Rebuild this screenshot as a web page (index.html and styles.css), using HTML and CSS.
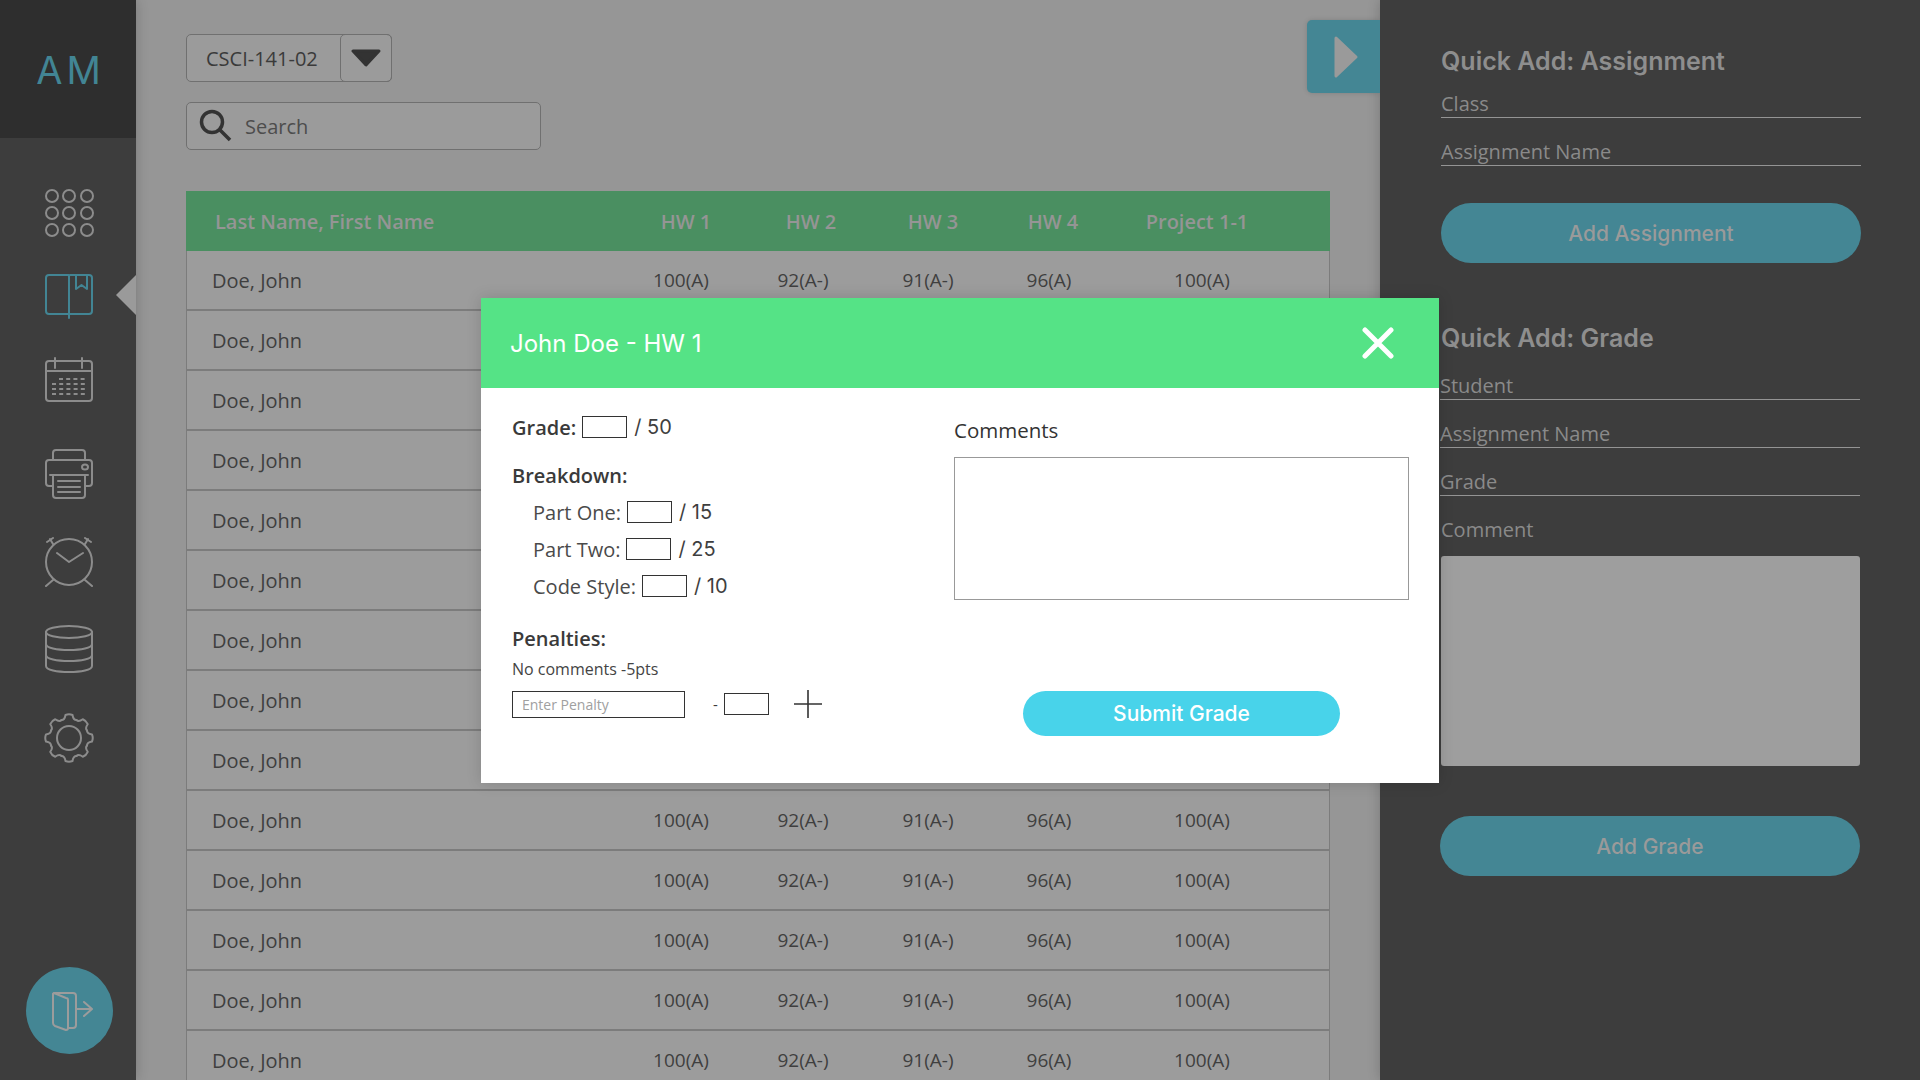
FILE: index.html
```html
<!DOCTYPE html>
<html>
<head>
    <title>Gradebook - AM</title>
    <link rel="stylesheet" href="styles.css">
</head>
<body>
<nav class="sidebar">
    <div class="brand">AM</div>
    <ul class="nav-list">
        <li class="nav-item">
            <svg class="icon" width="50" height="48" viewBox="0 0 50 48">
                <circle cx="8" cy="7" r="6"/><circle cx="25" cy="7" r="6"/><circle cx="43" cy="7" r="6"/>
                <circle cx="8" cy="24" r="6"/><circle cx="25" cy="24" r="6"/><circle cx="43" cy="24" r="6"/>
                <circle cx="8" cy="41" r="6"/><circle cx="25" cy="41" r="6"/><circle cx="43" cy="41" r="6"/>
            </svg>
        </li>
        <li class="nav-item nav-book">
            <svg class="icon icon-active" width="50" height="46" viewBox="0 0 50 46">
                <path d="M24 2H5Q2 2 2 5V38Q2 41 5 41H45Q48 41 48 38V5Q48 2 45 2H26Q25 2 25 4V45"/>
                <path d="M25 4Q25 2 24 2M32 2V16L37.5 12L43 16V2"/>
            </svg>
            <span class="nav-marker"></span>
        </li>
        <li class="nav-item nav-calendar">
            <svg class="icon" width="50" height="46" viewBox="0 0 50 46">
                <path d="M5 4H45Q48 4 48 7V41Q48 44 45 44H5Q2 44 2 41V7Q2 4 5 4ZM2 14H48M11 1V11M38 1V11"/>
                <path class="dash" d="M15 22H43M8 27H43M8 32H43M8 37H43"/>
            </svg>
        </li>
        <li class="nav-item nav-print">
            <svg class="icon" width="50" height="50" viewBox="0 0 50 50">
                <path d="M9 11V4Q9 1 12 1H38Q41 1 41 4V11"/>
                <path d="M9 37H5Q2 37 2 34V14Q2 11 5 11H45Q48 11 48 14V34Q48 37 45 37H41"/>
                <path d="M6 26H44M9 26V46Q9 49 12 49H38Q41 49 41 46V26M14 32H36M14 38H36M14 43H36"/>
                <ellipse cx="41" cy="18" rx="3" ry="2.5"/>
            </svg>
        </li>
        <li class="nav-item nav-clock">
            <svg class="icon" width="50" height="50" viewBox="0 0 50 50">
                <circle cx="25" cy="25" r="23"/>
                <path d="M13 16L25 25L39 16M2 49L9 43M48 49L41 43M3 5L9 1M47 5L41 1M6 2L9 7M44 2L41 7"/>
            </svg>
        </li>
        <li class="nav-item nav-db">
            <svg class="icon" width="50" height="48" viewBox="0 0 50 48">
                <ellipse cx="25" cy="7" rx="23" ry="6"/>
                <path d="M2 7V41C2 45 13 47 25 47S48 45 48 41V7"/>
                <path d="M2 19C2 23 13 25 25 25S48 23 48 19M2 30C2 34 13 36 25 36S48 34 48 30"/>
            </svg>
        </li>
        <li class="nav-item nav-gear">
            <svg class="icon" width="50" height="50" viewBox="0 0 50 50">
                <g id="gear">
                    <path d="M17.5 7C20 7 21 5 21.5 2Q25 .5 28.5 2C29 5 30 7 32.5 7"/>
                    <path transform="rotate(45 25 25)" d="M17.5 7C20 7 21 5 21.5 2Q25 .5 28.5 2C29 5 30 7 32.5 7"/>
                    <path transform="rotate(90 25 25)" d="M17.5 7C20 7 21 5 21.5 2Q25 .5 28.5 2C29 5 30 7 32.5 7"/>
                    <path transform="rotate(135 25 25)" d="M17.5 7C20 7 21 5 21.5 2Q25 .5 28.5 2C29 5 30 7 32.5 7"/>
                    <path transform="rotate(180 25 25)" d="M17.5 7C20 7 21 5 21.5 2Q25 .5 28.5 2C29 5 30 7 32.5 7"/>
                    <path transform="rotate(225 25 25)" d="M17.5 7C20 7 21 5 21.5 2Q25 .5 28.5 2C29 5 30 7 32.5 7"/>
                    <path transform="rotate(270 25 25)" d="M17.5 7C20 7 21 5 21.5 2Q25 .5 28.5 2C29 5 30 7 32.5 7"/>
                    <path transform="rotate(315 25 25)" d="M17.5 7C20 7 21 5 21.5 2Q25 .5 28.5 2C29 5 30 7 32.5 7"/>
                </g>
                <circle cx="25" cy="25" r="12"/>
            </svg>
        </li>
    </ul>
    <button class="logout">
        <svg class="icon icon-light" width="42" height="40" viewBox="0 0 42 40">
            <path d="M2 3Q2 2 4 2H22Q25 2 25 5V34Q25 37 22 37H17"/>
            <path d="M2 3V32Q2 34 4 35L15 39Q17 39 17 37V9Q17 7 15 7L3 2"/>
            <path d="M25 18H40M33 11L41 18L33 25"/>
        </svg>
    </button>
</nav>

<main class="main">
    <div class="select">
        <span class="select-value">CSCI-141-02</span>
        <span class="select-toggle">
            <svg class="select-arrow" width="30" height="18" viewBox="0 0 30 18"><path d="M2 2H28L15 16Z"/></svg>
        </span>
    </div>
    <div class="search">
        <svg class="search-icon" width="34" height="34" viewBox="0 0 34 34">
            <circle cx="13" cy="13" r="10.5"/>
            <path d="M20.5 20.5L31 31"/>
        </svg>
        <input class="search-input" type="text" placeholder="Search">
    </div>

    <div class="table">
        <div class="table-head">
            <span class="name">Last Name, First Name</span>
            <span class="cell">HW 1</span>
            <span class="cell">HW 2</span>
            <span class="cell">HW 3</span>
            <span class="cell">HW 4</span>
            <span class="cell">Project 1-1</span>
        </div>
        <div class="table-row"><span class="name">Doe, John</span><span class="cell">100(A)</span><span class="cell">92(A-)</span><span class="cell">91(A-)</span><span class="cell">96(A)</span><span class="cell">100(A)</span></div>
        <div class="table-row"><span class="name">Doe, John</span><span class="cell">100(A)</span><span class="cell">92(A-)</span><span class="cell">91(A-)</span><span class="cell">96(A)</span><span class="cell">100(A)</span></div>
        <div class="table-row"><span class="name">Doe, John</span><span class="cell">100(A)</span><span class="cell">92(A-)</span><span class="cell">91(A-)</span><span class="cell">96(A)</span><span class="cell">100(A)</span></div>
        <div class="table-row"><span class="name">Doe, John</span><span class="cell">100(A)</span><span class="cell">92(A-)</span><span class="cell">91(A-)</span><span class="cell">96(A)</span><span class="cell">100(A)</span></div>
        <div class="table-row"><span class="name">Doe, John</span><span class="cell">100(A)</span><span class="cell">92(A-)</span><span class="cell">91(A-)</span><span class="cell">96(A)</span><span class="cell">100(A)</span></div>
        <div class="table-row"><span class="name">Doe, John</span><span class="cell">100(A)</span><span class="cell">92(A-)</span><span class="cell">91(A-)</span><span class="cell">96(A)</span><span class="cell">100(A)</span></div>
        <div class="table-row"><span class="name">Doe, John</span><span class="cell">100(A)</span><span class="cell">92(A-)</span><span class="cell">91(A-)</span><span class="cell">96(A)</span><span class="cell">100(A)</span></div>
        <div class="table-row"><span class="name">Doe, John</span><span class="cell">100(A)</span><span class="cell">92(A-)</span><span class="cell">91(A-)</span><span class="cell">96(A)</span><span class="cell">100(A)</span></div>
        <div class="table-row"><span class="name">Doe, John</span><span class="cell">100(A)</span><span class="cell">92(A-)</span><span class="cell">91(A-)</span><span class="cell">96(A)</span><span class="cell">100(A)</span></div>
        <div class="table-row"><span class="name">Doe, John</span><span class="cell">100(A)</span><span class="cell">92(A-)</span><span class="cell">91(A-)</span><span class="cell">96(A)</span><span class="cell">100(A)</span></div>
        <div class="table-row"><span class="name">Doe, John</span><span class="cell">100(A)</span><span class="cell">92(A-)</span><span class="cell">91(A-)</span><span class="cell">96(A)</span><span class="cell">100(A)</span></div>
        <div class="table-row"><span class="name">Doe, John</span><span class="cell">100(A)</span><span class="cell">92(A-)</span><span class="cell">91(A-)</span><span class="cell">96(A)</span><span class="cell">100(A)</span></div>
        <div class="table-row"><span class="name">Doe, John</span><span class="cell">100(A)</span><span class="cell">92(A-)</span><span class="cell">91(A-)</span><span class="cell">96(A)</span><span class="cell">100(A)</span></div>
        <div class="table-row"><span class="name">Doe, John</span><span class="cell">100(A)</span><span class="cell">92(A-)</span><span class="cell">91(A-)</span><span class="cell">96(A)</span><span class="cell">100(A)</span></div>
    </div>

    <button class="collapse">
        <svg class="collapse-arrow" width="26" height="44" viewBox="0 0 26 44"><path d="M3 3L23 22L3 41Z"/></svg>
    </button>
</main>

<aside class="panel">
    <h2 class="panel-title">Quick Add: Assignment</h2>
    <input class="line-input" type="text" placeholder="Class">
    <input class="line-input" type="text" placeholder="Assignment Name">
    <button class="panel-button">Add Assignment</button>

    <h2 class="panel-title panel-title-grade">Quick Add: Grade</h2>
    <div class="grade-fields">
        <input class="line-input" type="text" placeholder="Student">
        <input class="line-input" type="text" placeholder="Assignment Name">
        <input class="line-input" type="text" placeholder="Grade">
    </div>
    <label class="panel-label">Comment</label>
    <textarea class="panel-comment"></textarea>
    <button class="panel-button panel-button-grade">Add Grade</button>
</aside>

<section class="modal">
    <header class="modal-head">
        <h2 class="modal-title">John Doe - HW 1</h2>
        <svg class="modal-close" width="32" height="32" viewBox="0 0 32 32">
            <path d="M3 3L29 29M29 3L3 29"/>
        </svg>
    </header>
    <div class="modal-body">
        <div class="modal-left">
            <div class="grade-line">
                <strong>Grade:</strong><input class="box" type="text"><span class="out-of">/ 50</span>
            </div>
            <h3 class="sub-title">Breakdown:</h3>
            <div class="part-line">Part One:<input class="box" type="text"><span class="out-of">/ 15</span></div>
            <div class="part-line">Part Two:<input class="box" type="text"><span class="out-of">/ 25</span></div>
            <div class="part-line">Code Style:<input class="box" type="text"><span class="out-of">/ 10</span></div>
            <h3 class="sub-title sub-title-penalties">Penalties:</h3>
            <p class="penalty-note">No comments -5pts</p>
            <div class="penalty-line">
                <input class="penalty-input" type="text" placeholder="Enter Penalty">
                <span class="penalty-minus">-</span>
                <input class="box" type="text">
                <svg class="penalty-add" width="28" height="28" viewBox="0 0 28 28"><path d="M0 14H28M14 0V28"/></svg>
            </div>
        </div>
        <div class="modal-right">
            <label class="comments-label">Comments</label>
            <textarea class="comments-box"></textarea>
            <button class="submit">Submit Grade</button>
        </div>
    </div>
</section>
</body>
</html>
```

FILE: styles.css
```css
* {
	box-sizing: border-box;
}

html,
body {
	height: 100%;
}

body {
	display: flex;
	margin: 0;
	overflow: hidden;
	background-color: #969696;
	font-family: "Open Sans", Arial, sans-serif;
	color: #3a3a3a;
}

input,
textarea,
button {
	font-family: inherit;
	outline: none;
}

ul {
	list-style: none;
	margin: 0;
	padding: 0;
}

/* Left navigation */
.sidebar {
	position: relative;
	z-index: 1;
	flex: 0 0 136px;
	height: 1080px;
	background-color: #3d3d3d;
	box-shadow: 0 0 12px rgba(0, 0, 0, 0.2);
}

.brand {
	height: 138px;
	padding: 45px 0 0 5px;
	background-color: #2e2e2e;
	font-family: Inter, sans-serif;
	font-size: 38px;
	line-height: 50px;
	letter-spacing: 4px;
	text-align: center;
	color: #428594;
}

.nav-list {
	display: flex;
	flex-direction: column;
	align-items: center;
	gap: 37px;
	padding: 51px 0 0 2px;
}

.nav-item {
	position: relative;
	display: flex;
	justify-content: center;
	width: 100%;
}

.nav-book {
	margin-top: -1px;
}

.nav-calendar {
	margin-top: 1px;
}

.nav-print {
	margin-top: 9px;
}

.nav-clock {
	margin-top: 1px;
}

.nav-db {
	margin-top: 1px;
}

.nav-gear {
	margin-top: 3px;
}

.nav-marker {
	position: absolute;
	top: 2px;
	right: 0;
	width: 0;
	height: 0;
	border-top: 20px solid transparent;
	border-bottom: 20px solid transparent;
	border-right: 20px solid #9a9a9a;
}

.icon {
	fill: none;
	stroke: #8c8c8c;
	stroke-width: 2;
	stroke-linecap: round;
	stroke-linejoin: round;
}

.icon-active {
	stroke: #428594;
}

.icon-light {
	stroke: #9c9c9c;
}

.dash {
	stroke-dasharray: 4 3.2;
	stroke-linecap: butt;
}

.logout {
	position: absolute;
	left: 26px;
	top: 967px;
	display: flex;
	align-items: center;
	justify-content: center;
	width: 87px;
	height: 87px;
	padding: 0 0 0 4px;
	border: none;
	border-radius: 50%;
	background-color: #448694;
}

/* Main column */
.main {
	position: relative;
	flex: 0 0 1244px;
	height: 1080px;
	padding: 34px 50px 0;
	overflow: hidden;
}

.select {
	display: flex;
	width: 206px;
	height: 48px;
	border: 1px solid #707070;
	border-radius: 5px;
	background-color: #9b9b9b;
}

.select-value {
	flex: 1;
	padding-left: 19px;
	font-size: 20px;
	line-height: 47px;
}

.select-toggle {
	display: flex;
	align-items: center;
	justify-content: center;
	width: 52px;
	margin: -1px -1px -1px 0;
	border: 1px solid #707070;
	border-radius: 5px;
}

.select-arrow {
	fill: #333;
	stroke: #333;
	stroke-width: 3;
	stroke-linejoin: round;
}

.search {
	display: flex;
	align-items: center;
	width: 355px;
	height: 48px;
	margin-top: 20px;
	padding-left: 12px;
	border: 1px solid #707070;
	border-radius: 5px;
	background-color: #9b9b9b;
}

.search-icon {
	flex: none;
	fill: none;
	stroke: #333;
	stroke-width: 3.5;
}

.search-input {
	width: 280px;
	margin-left: 12px;
	padding: 0;
	border: none;
	background: none;
	font-size: 20px;
}

.search-input::placeholder {
	color: #4d4d4d;
	opacity: 1;
}

.table {
	width: 1144px;
	margin-top: 41px;
}

.table-head {
	display: grid;
	grid-template-columns: 410px 122px 128px 116px 124px 164px;
	align-items: center;
	height: 60px;
	padding-left: 29px;
	background-color: #4a8f61;
	font-size: 20px;
	font-weight: 600;
	color: #959595;
}

.table-row {
	display: grid;
	grid-template-columns: 408px 122px 122px 128px 114px 192px;
	align-items: center;
	height: 60px;
	padding-left: 25px;
	border-left: 1px solid #7c7c7c;
	border-right: 1px solid #7c7c7c;
	border-bottom: 2px solid #7c7c7c;
	background-color: #9c9c9c;
	font-size: 20px;
	color: #3f3f3f;
}

.name {
	justify-self: start;
}

.cell {
	text-align: center;
}

.table-row .cell {
	font-size: 19px;
}

.collapse {
	position: absolute;
	top: 20px;
	right: 0;
	display: flex;
	align-items: center;
	justify-content: center;
	width: 73px;
	height: 73px;
	padding: 0 0 0 4px;
	border: none;
	border-radius: 5px 0 0 5px;
	background-color: #448694;
	box-shadow: 0 0 5px rgba(0, 0, 0, 0.15);
}

.collapse-arrow {
	fill: #9a9a9a;
	stroke: #9a9a9a;
	stroke-width: 3;
	stroke-linejoin: round;
}

/* Right panel */
.panel {
	flex: 0 0 540px;
	height: 1080px;
	padding: 47px 59px 0 61px;
	background-color: #3d3d3d;
	box-shadow: 0 0 12px rgba(0, 0, 0, 0.2);
}

.panel-title {
	margin: 0;
	font-family: Inter, sans-serif;
	font-size: 25px;
	font-weight: 600;
	line-height: 28px;
	color: #8e8e8e;
}

.panel-title-grade {
	margin-top: 61px;
}

.line-input {
	display: block;
	width: 100%;
	height: 33px;
	margin-top: 15px;
	padding: 5px 0 0;
	border: none;
	border-bottom: 1px solid #949494;
	background: none;
	font-size: 20px;
}

.panel-title + .line-input {
	margin-top: 10px;
}

.grade-fields {
	width: 420px;
	margin-left: -1px;
}

.line-input::placeholder {
	color: #8a8a8a;
	opacity: 1;
}

.panel-label {
	display: block;
	margin-top: 21px;
	font-size: 20px;
	line-height: 26px;
	color: #8a8a8a;
}

.panel-comment {
	display: block;
	width: 419px;
	height: 210px;
	margin-top: 13px;
	border: none;
	border-radius: 3px;
	background-color: #9e9e9e;
	resize: none;
}

.panel-button {
	display: block;
	width: 100%;
	height: 60px;
	margin-top: 37px;
	border: none;
	border-radius: 30px;
	background-color: #448694;
	font-family: Inter, sans-serif;
	font-size: 21px;
	font-weight: 500;
	color: #9a9a9a;
}

.panel-button-grade {
	width: 420px;
	margin: 50px 0 0 -1px;
}

/* Grade dialog */
.modal {
	position: absolute;
	left: 481px;
	top: 298px;
	z-index: 2;
	width: 958px;
	height: 485px;
	background-color: #fff;
	box-shadow: 0 0 14px rgba(0, 0, 0, 0.15);
}

.modal-head {
	display: flex;
	align-items: center;
	justify-content: space-between;
	height: 90px;
	padding: 0 45px 0 29px;
	background-color: #55e386;
}

.modal-title {
	margin: 0;
	font-family: Inter, sans-serif;
	font-size: 24px;
	font-weight: 400;
	color: #fff;
}

.modal-close {
	fill: none;
	stroke: #fff;
	stroke-width: 5;
	stroke-linecap: round;
}

.modal-body {
	display: flex;
	padding: 0 30px 0 31px;
}

.modal-left {
	flex: 0 0 442px;
	padding-top: 24px;
}

.grade-line {
	display: flex;
	align-items: center;
	height: 30px;
	font-size: 20px;
}

.grade-line strong {
	font-weight: 600;
}

.box {
	width: 45px;
	height: 22px;
	margin-left: 6px;
	padding: 0;
	border: 1px solid #333;
	background: #fff;
}

.out-of {
	margin-left: 7px;
	font-family: Inter, sans-serif;
	font-size: 20px;
	color: #3f3f3f;
}

.sub-title {
	margin: 20px 0 0;
	font-size: 20px;
	font-weight: 600;
	line-height: 28px;
}

.part-line {
	display: flex;
	align-items: center;
	height: 30px;
	margin: 7px 0 0 21px;
	font-size: 20px;
	color: #4a4a4a;
}

.sub-title-penalties {
	margin-top: 24px;
}

.penalty-note {
	margin: 3px 0 0;
	font-size: 16px;
	line-height: 26px;
	color: #444;
}

.penalty-line {
	display: flex;
	align-items: center;
	margin-top: 8px;
}

.penalty-input {
	width: 173px;
	height: 27px;
	padding: 0 9px;
	border: 1px solid #333;
	border-radius: 0;
	font-size: 14px;
}

.penalty-input::placeholder {
	color: #a0a0a0;
	opacity: 1;
}

.penalty-minus {
	margin-left: 28px;
	font-size: 15px;
}

.penalty-line .box {
	margin-left: 6px;
}

.penalty-add {
	margin-left: 25px;
	fill: none;
	stroke: #333;
	stroke-width: 1.6;
}

.modal-right {
	flex: 1;
	padding-top: 27px;
}

.comments-label {
	display: block;
	font-size: 20.5px;
	line-height: 30px;
	color: #333;
}

.comments-box {
	display: block;
	width: 455px;
	height: 143px;
	margin-top: 12px;
	border: 1px solid #999;
	resize: none;
}

.submit {
	display: block;
	width: 317px;
	height: 45px;
	margin: 91px 0 0 69px;
	border: none;
	border-radius: 23px;
	background-color: #48d3ea;
	font-family: Inter, sans-serif;
	font-size: 21px;
	font-weight: 500;
	color: #fff;
}
```
